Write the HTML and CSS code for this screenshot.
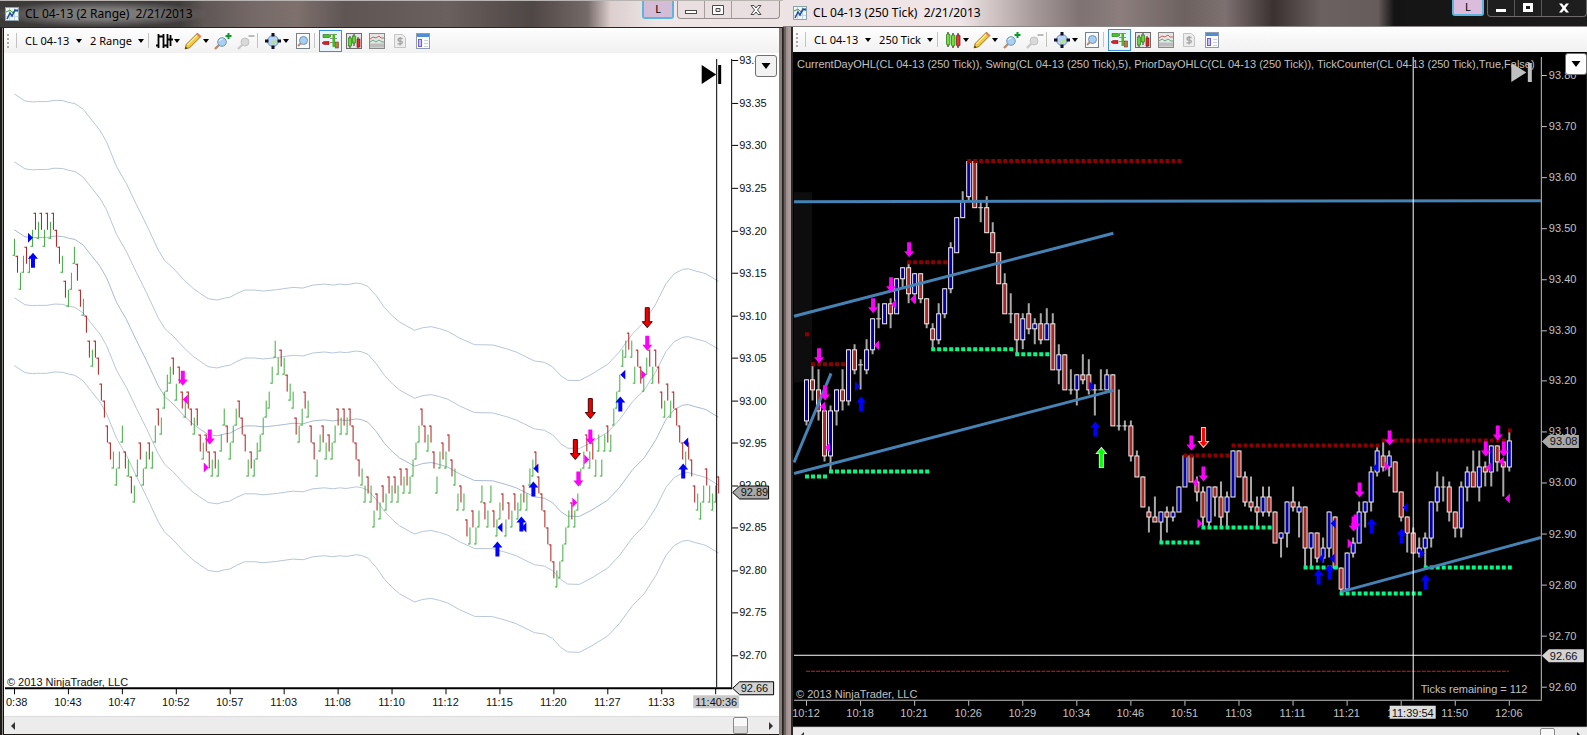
FILE: index.html
```html
<!DOCTYPE html>
<html lang="en">
<head>
<meta charset="utf-8">
<title>NinjaTrader charts</title>
<link rel="stylesheet" href="styles.css">
</head>
<body>
<svg class="sprite" aria-hidden="true">
  <symbol id="i-app" viewBox="0 0 14 14"><rect x=".5" y=".5" width="13" height="13" fill="#eef6fa" stroke="#8fa3ad"/><path d="M4.500 1v12M9.500 1v12M1 4.500h12M1 9.500h12" stroke="#c3d6de"/><path d="M1 5l4-2 3 3 5-4" stroke="#4aa54a" fill="none"/><path d="M2 12l3-6 2 3 3-6 3 1" stroke="#1d4f9c" stroke-width="1.500" fill="none"/></symbol>
  <symbol id="i-bars" viewBox="0 0 18 18"><path d="M3.500 2v14M1 13.500h2M3 4.500h3M8.500 2v14M6 4.500h2M9 13.500h1M12.500 2v14M10 13.500h2M15.500 3v11M13 7.500h5" stroke="#000" stroke-width="1.800"/></symbol>
  <symbol id="i-candles" viewBox="0 0 18 18"><path d="M4 1v15M9 2v15M14 2v15" stroke="#000"/><rect x="2.500" y="3" width="3.500" height="11" rx="1" fill="#6fe03a" stroke="#206b10" stroke-width=".7"/><rect x="7.500" y="4" width="3.500" height="11" rx="1" fill="#6fe03a" stroke="#206b10" stroke-width=".7"/><rect x="12.500" y="4" width="3.500" height="11" rx="1" fill="#e03a3a" stroke="#7b1010" stroke-width=".7"/></symbol>
  <symbol id="i-pencil" viewBox="0 0 16 16"><path d="M1 15l1-4L12 1l3 3L5 14z" fill="#f3c93c" stroke="#8a6a14" stroke-width=".8"/><path d="M11 2l1-1 3 3-1 1z" fill="#e0787a"/><path d="M3 11.500L11.500 3" stroke="#fff0a8"/><path d="M1 15l.6-2 1.400 1.400z" fill="#222"/></symbol>
  <symbol id="i-lens" viewBox="0 0 18 18"><path d="M1 17l4-4" stroke="#b98b6d" stroke-width="2.400"/><circle cx="8" cy="10" r="4.300" fill="#a9d0f2" stroke="#7396b8"/><path d="M5.500 9a3 3 0 0 1 3-2" stroke="#fff" fill="none"/></symbol>
  <symbol id="i-zoomin" viewBox="0 0 18 18"><use href="#i-lens"/><path d="M14.500 1v6M11.500 4h6" stroke="#0a9a2a" stroke-width="2"/></symbol>
  <symbol id="i-zoomout" viewBox="0 0 18 18"><path d="M1 17l4-4" stroke="#c9c9c9" stroke-width="2.400"/><circle cx="8" cy="10" r="4" fill="#d9d9d9" stroke="#c2c2c2"/><path d="M11.500 4h6" stroke="#bbb" stroke-width="2"/></symbol>
  <symbol id="i-target" viewBox="0 0 18 18"><circle cx="9" cy="9" r="5.500" fill="#b7d2f3" stroke="#6b93c4"/><path d="M6 12a5 5 0 0 0 7-4c-2 0-5 1-7 4z" fill="#b7e08a"/><path d="M9 1v3.500M9 13.500V17M1 9h3.500M13.500 9H17" stroke="#112" stroke-width="3"/></symbol>
  <symbol id="i-page" viewBox="0 0 18 18"><rect x="2.500" y="1.500" width="13" height="15" fill="#f8fafc" stroke="#7a8088"/><path d="M4 14l3-3" stroke="#b98b6d" stroke-width="2"/><circle cx="9.500" cy="8.500" r="4" fill="#a9cdee" stroke="#7396b8"/></symbol>
  <symbol id="i-trader" viewBox="0 0 18 18"><path d="M1 2.500h6l2 1.500-2 1.500H1z" stroke-width=".6" fill="#49c51e" stroke="#1e6b10"/><path d="M7 9.500H2L0 11l2 1.500h5z" fill="#dc2222" stroke="#8a1010" stroke-width=".6"/><path d="M8 2.500h7M8 6.500h7M8 10.500h7" stroke="#777" stroke-width=".8"/><rect x="10.500" y="2" width="2.500" height="13" fill="#49b81e"/><rect x="13.500" y="10" width="3" height="6" fill="#b77a4a" stroke="#70401c" stroke-width=".6"/></symbol>
  <symbol id="i-chart" viewBox="0 0 18 18"><rect x="1.500" y="1.500" width="15" height="15" fill="#e4e4e4" stroke="#6b6b6b"/><path d="M5 4v12M9 2v12M13 5v11" stroke="#333"/><rect x="3.500" y="6" width="3" height="8" fill="#63d832" stroke="#1e6b10" stroke-width=".6"/><rect x="7.500" y="4" width="3" height="7" fill="#63d832" stroke="#1e6b10" stroke-width=".6"/><rect x="12" y="7" width="3" height="8" fill="#dc2a2a" stroke="#7b1010" stroke-width=".6"/></symbol>
  <symbol id="i-lines" viewBox="0 0 18 18"><rect x="1.500" y="1.500" width="15" height="15" fill="#e6e6e6" stroke="#8a8a8a"/><path d="M2 7l3-2 3 1 3-2 2 2 3 0" stroke="#dc5a5a" fill="none"/><path d="M2 10l3-2 3 2 3-2 3 2 2 0" stroke="#5aaa7a" fill="none"/><path d="M2 13.500h14" stroke="#bdbdbd" stroke-width="4"/></symbol>
  <symbol id="i-money" viewBox="0 0 18 18"><path d="M3.500 2.500h8l3 3v10h-11z" fill="#ededed" stroke="#c4c4c4"/><path d="M11.500 6.500H8.300a1.300 1.300 0 0 0 0 2.600h1.600a1.300 1.300 0 0 1 0 2.700H6.500M9.100 5v8.500" stroke="#a4a4a4" stroke-width="1.300" fill="none"/></symbol>
  <symbol id="i-panel" viewBox="0 0 18 18"><rect x="2.500" y="1.500" width="13" height="15" fill="#fafcff" stroke="#8f9bb0"/><path d="M3 3.500h12" stroke="#4d8fd0" stroke-width="3"/><rect x="4.500" y="7.500" width="3" height="7" fill="#c9c0f5" stroke="#6f5fd0"/><path d="M10 8.500h4M10 11.500h4M10 14.500h4" stroke="#ccd3dd"/></symbol>
  <symbol id="i-caret" viewBox="0 0 6 4"><path d="M0 0h6L3 4z"/></symbol>
</svg>

<main class="desktop">
  <section class="window window-range" aria-label="CL 04-13 2 Range chart">
    <header class="titlebar">
      <svg class="app-icon"><use href="#i-app"/></svg>
      <h1 class="title">CL 04-13 (2 Range)&nbsp; 2/21/2013</h1>
      <button class="link-button" type="button">L</button>
      <div class="caption">
        <button type="button" aria-label="Minimize"><svg viewBox="0 0 14 12"><rect x="1.500" y="6.500" width="11" height="3"/></svg></button>
        <button type="button" aria-label="Maximize"><svg viewBox="0 0 14 12"><path d="M1.500 1.500h11v9h-11zM5 4.500h4v3H5z" fill-rule="evenodd"/></svg></button>
        <button class="close" type="button" aria-label="Close"><svg viewBox="0 0 14 12"><path d="M2 1.500h3l2 2.500 2-2.500h3L8.500 6l3.500 4.500H9L7 8l-2 2.500H2L5.500 6z"/></svg></button>
      </div>
    </header>
    <div class="toolbar">
      <span class="grip"></span><span class="sep"></span>
      <label class="pick"><select aria-label="Instrument"><option>CL 04-13</option></select><svg class="caret"><use href="#i-caret"/></svg></label>
      <label class="pick"><select aria-label="Interval"><option>2 Range</option></select><svg class="caret"><use href="#i-caret"/></svg></label>
      <span class="sep"></span>
      <button class="tool drop" type="button" aria-label="Chart style"><svg class="icon"><use href="#i-bars"/></svg><svg class="caret"><use href="#i-caret"/></svg></button>
      <button class="tool drop" type="button" aria-label="Drawing tools"><svg class="icon"><use href="#i-pencil"/></svg><svg class="caret"><use href="#i-caret"/></svg></button>
      <button class="tool" type="button" aria-label="Zoom in"><svg class="icon"><use href="#i-zoomin"/></svg></button>
      <button class="tool" type="button" aria-label="Zoom out"><svg class="icon"><use href="#i-zoomout"/></svg></button>
      <span class="sep"></span>
      <button class="tool drop" type="button" aria-label="Cross hair"><svg class="icon"><use href="#i-target"/></svg><svg class="caret"><use href="#i-caret"/></svg></button>
      <button class="tool" type="button" aria-label="Data box"><svg class="icon"><use href="#i-page"/></svg></button>
      <span class="sep"></span>
      <button class="tool active" type="button" aria-label="Chart trader"><svg class="icon"><use href="#i-trader"/></svg></button>
      <button class="tool" type="button" aria-label="Data series"><svg class="icon"><use href="#i-chart"/></svg></button>
      <button class="tool" type="button" aria-label="Indicators"><svg class="icon"><use href="#i-lines"/></svg></button>
      <button class="tool" type="button" aria-label="Strategies"><svg class="icon"><use href="#i-money"/></svg></button>
      <button class="tool" type="button" aria-label="Properties"><svg class="icon"><use href="#i-panel"/></svg></button>
    </div>
    <div class="plot">
      <svg class="chart" id="range-chart" viewBox="4 53 776 664" role="img" aria-label="Range bar chart"></svg>
      <button class="plot-menu" type="button" aria-label="Axis menu"><svg><use href="#i-caret"/></svg></button>
    </div>
    <div class="scroll">
      <button type="button" aria-label="Scroll left"><svg viewBox="0 0 4 8"><path d="M4 0v8L0 4z"/></svg></button>
      <input type="range" aria-label="Scroll position" min="0" max="100" value="98">
      <button type="button" aria-label="Scroll right"><svg viewBox="0 0 4 8"><path d="M0 0v8l4-4z"/></svg></button>
    </div>
  </section>

  <section class="window window-tick" aria-label="CL 04-13 250 Tick chart">
    <header class="titlebar">
      <svg class="app-icon"><use href="#i-app"/></svg>
      <h1 class="title">CL 04-13 (250 Tick)&nbsp; 2/21/2013</h1>
      <button class="link-button" type="button">L</button>
      <div class="caption">
        <button type="button" aria-label="Minimize"><svg viewBox="0 0 14 12"><rect x="2" y="7" width="10" height="3"/></svg></button>
        <button type="button" aria-label="Maximize"><svg viewBox="0 0 14 12"><path d="M2 1h10v9H2zM5 4h4v3H5z" fill-rule="evenodd"/></svg></button>
        <button class="close" type="button" aria-label="Close"><svg viewBox="0 0 14 12"><path d="M2 1.500h3l2 2.500 2-2.500h3L8.500 6l3.500 4.500H9L7 8l-2 2.500H2L5.500 6z"/></svg></button>
      </div>
    </header>
    <div class="toolbar">
      <span class="grip"></span><span class="sep"></span>
      <label class="pick"><select aria-label="Instrument"><option>CL 04-13</option></select><svg class="caret"><use href="#i-caret"/></svg></label>
      <label class="pick"><select aria-label="Interval"><option>250 Tick</option></select><svg class="caret"><use href="#i-caret"/></svg></label>
      <span class="sep"></span>
      <button class="tool drop" type="button" aria-label="Chart style"><svg class="icon"><use href="#i-candles"/></svg><svg class="caret"><use href="#i-caret"/></svg></button>
      <button class="tool drop" type="button" aria-label="Drawing tools"><svg class="icon"><use href="#i-pencil"/></svg><svg class="caret"><use href="#i-caret"/></svg></button>
      <button class="tool" type="button" aria-label="Zoom in"><svg class="icon"><use href="#i-zoomin"/></svg></button>
      <button class="tool" type="button" aria-label="Zoom out"><svg class="icon"><use href="#i-zoomout"/></svg></button>
      <span class="sep"></span>
      <button class="tool drop" type="button" aria-label="Cross hair"><svg class="icon"><use href="#i-target"/></svg><svg class="caret"><use href="#i-caret"/></svg></button>
      <button class="tool" type="button" aria-label="Data box"><svg class="icon"><use href="#i-page"/></svg></button>
      <span class="sep"></span>
      <button class="tool active" type="button" aria-label="Chart trader"><svg class="icon"><use href="#i-trader"/></svg></button>
      <button class="tool" type="button" aria-label="Data series"><svg class="icon"><use href="#i-chart"/></svg></button>
      <button class="tool" type="button" aria-label="Indicators"><svg class="icon"><use href="#i-lines"/></svg></button>
      <button class="tool" type="button" aria-label="Strategies"><svg class="icon"><use href="#i-money"/></svg></button>
      <button class="tool" type="button" aria-label="Properties"><svg class="icon"><use href="#i-panel"/></svg></button>
    </div>
    <div class="plot">
      <svg class="chart" id="tick-chart" viewBox="794 52 793 674" role="img" aria-label="Tick candlestick chart"></svg>
      <button class="plot-menu" type="button" aria-label="Axis menu"><svg><use href="#i-caret"/></svg></button>
    </div>
    <div class="scroll">
      <button type="button" aria-label="Scroll left"><svg viewBox="0 0 4 8"><path d="M4 0v8L0 4z"/></svg></button>
      <input type="range" aria-label="Scroll position" min="0" max="100" value="98">
      <button type="button" aria-label="Scroll right"><svg viewBox="0 0 4 8"><path d="M0 0v8l4-4z"/></svg></button>
    </div>
  </section>
</main>
<script src="charts.js"></script>
</body>
</html>
```
FILE: charts.js
```javascript
(function () {
  // Marker shapes, each anchored at its tip (arrows) or centre (triangles).
  function up(x, y, cls) {
    return '<path class="' + cls + '" d="M' + x + ' ' + y + 'l5 6h-3v9h-4v-9h-3z"/>';
  }
  function down(x, y, cls) {
    return '<path class="' + cls + '" d="M' + (x - 2) + ' ' + y + 'h4v9h3l-5 6l-5 -6h3z"/>';
  }
  function bigUp(x, y, cls) {
    return '<path class="' + cls + '" d="M' + x + ' ' + y + 'l5 6h-3v14h-4v-14h-3z"/>';
  }
  function bigDown(x, y, cls) {
    return '<path class="' + cls + '" d="M' + (x - 2) + ' ' + y + 'h4v14h3l-5 6l-5 -6h3z"/>';
  }
  function left(x, y, cls) {
    return '<path class="' + cls + '" d="M' + (x - 3) + ' ' + y + 'l5 -5v10z"/>';
  }
  function right(x, y, cls) {
    return '<path class="' + cls + '" d="M' + (x + 2) + ' ' + y + 'l-5 -5v10z"/>';
  }
  function each(list, shape, cls) {
    return list.map(function (p) { return shape(p[0] + 1, p[1], cls); }).join('');
  }
  function line(x1, y1, x2, y2, cls) {
    return '<line x1="' + x1 + '" y1="' + y1 + '" x2="' + x2 + '" y2="' + y2 + '" class="' + cls + '"/>';
  }
  function text(x, y, s, cls) {
    return '<text x="' + x + '" y="' + y + '" class="' + cls + '">' + s + '</text>';
  }
  function tag(x, y, w, s, cls) {
    return '<path class="' + cls + '" d="M' + x + ' ' + y + 'l7 -6.500h' + (w - 7) + 'v13h-' + (w - 7) + 'z"/>' +
      text(x + 8, y + 4, s, 'tag-text');
  }

  /* ---------- 2 range chart ---------- */

  // Each bar: top in ticks below 93.22, then g (up) or r (down).
  var bars = ('3g 5r 7g 5g 4r 5g 2g 0r 1g 0r 2g 0r 1g 0r 2r 4r 5g 8r 9g 7g 4g 6r 9r 10g 12r 15r 16g 15r 17r ' +
    '20r 22r 25r 27r 28g 30g 28g 25g 28r 29g 31r 32g 29g 27r 30g 28g 27r 28g 25g 23r 24g 21g 19g 18g 17r 20g 18r ' +
    '21r 22g 21r 23r 24g 23r 26r 27g 26r 28r 29g 28r 29g 26g 23g 25r 27g 25g 23g 22r 24r 26r 29g 28r 29g 27g 26g ' +
    '24g 22g 21g 18g 15g 17g 16r 17g 19r 20g 21g 24r 25g 23g 21r 22g 25r 27r 29g 26g 25r 27g 26r 27g 25g 23r 24g ' +
    '23r 24g 23r 25r 27r 29r 30g 32g 31r 32g 35g 33r 34g 32r 33g 31r 32g 31r 32g 30r 31g 30r 31g 29g 27g 25g 23r ' +
    '25r 26g 25r 28r 31g 28g 27r 28g 26r 29r 30g 33g 32r 33g 36r 37g 35r 37g 35g 32g 34r 35g 32g 35r 36g 34g 33r ' +
    '36g 34r 35g 33r 34g 33g 32r 33g 30g 29g 28r 31r 33r 35r 37r 39r 41r 42g 41g 39g 37g 35g 34r 35g 33g 30g 28g ' +
    '26r 28g 27r 29g 26g 29g 26g 25r 26g 23g 21g 19g 16g 15g 14r 15g 18g 16r 18r 19g 17g 16r 18g 16r 18r 21r 22g ' +
    '20r 22g 21r 23r 25r 27r 28g 27r 29r 32r 33g 34g 32g 30r 32g 33g 32g 31r').split(' ');

  var tick = 8.51;
  var barPaths = { g: '', r: '' };
  bars.forEach(function (b, i) {
    var color = b.slice(-1);
    var x = 14.5 + i * 3;
    var y = Math.round(213.4 + parseInt(b, 10) * tick);
    barPaths[color] += 'M' + x + ' ' + y + 'v17' +
      (color === 'r' ? 'M' + (x - 2) + ' ' + (y + 0.5) + 'h2' : 'M' + (x - 2) + ' ' + (y + 16.5) + 'h2');
  });

  // Middle band, in thirds of a unit.
  var band = '43,690 75,711 97,714 110,713 140,713 165,709 188,710 205,715 225,719 250,736 275,768 300,799 320,834 ' +
    '350,908 380,960 410,1023 440,1083 475,1158 495,1191 520,1213 550,1246 580,1274 600,1288 625,1305 652,1309 ' +
    '675,1303 690,1301 710,1290 735,1279 765,1279 790,1282 830,1278 880,1271 910,1273 940,1264 975,1261 1000,1264 ' +
    '1020,1261 1040,1263 1070,1258 1085,1260 1105,1268 1130,1296 1155,1332 1180,1358 1200,1375 1245,1400 1270,1392 ' +
    '1295,1389 1320,1395 1345,1403 1380,1423 1425,1443 1480,1444 1520,1455 1550,1465 1605,1492 1635,1496 1660,1510 ' +
    '1685,1537 1705,1550 1740,1551 1775,1533 1825,1502 1860,1465 1900,1410 1935,1375 1970,1320 2000,1260 2025,1230 ' +
    '2050,1217 2067,1215 2090,1222 2110,1227 2120,1230 2158,1253';
  var bands = [-408, -204, 0, 204, 408].map(function (dy) {
    return '<polyline class="band' + (dy ? '' : ' band-mid') + '" transform="scale(.33333) translate(0 ' + dy + ')" points="' + band + '"/>';
  }).join('');

  var axis = line(732.5, 59, 732.5, 688, 'ink') + line(5, 689, 733, 689, 'ink thick') + line(717.5, 59, 717.5, 688, 'ink');
  var p, i, y;
  for (i = 0; i <= 14; i++) {
    p = 93.4 - i * 0.05;
    y = Math.round(60.3 + i * 5 * tick);
    axis += line(733, y + 0.5, 739, y + 0.5, 'ink') + text(740, y + 4, p.toFixed(2), 'label');
  }
  for (i = 0; i <= 13; i++) {
    axis += line(14.5 + i * 54, 689, 14.5 + i * 54, 695, 'ink');
  }
  axis += text(6, 707, '0:38', 'label');
  ['10:43', '10:47', '10:52', '10:57', '11:03', '11:08', '11:10', '11:12', '11:15', '11:20', '11:27', '11:33']
    .forEach(function (t, n) {
      axis += text(68 + n * 54, 707, t, 'label mid');
    });

  document.getElementById('range-chart').innerHTML =
    bands +
    '<path class="bar-up" d="' + barPaths.g + '"/><path class="bar-down" d="' + barPaths.r + '"/>' +
    axis +
    '<path d="M702.500 65v19l14.500 -9.500zM719 65h3v19h-3z"/>' +
    each([[32, 253], [497, 542], [521, 517], [533, 482], [620, 397], [683, 464]], up, 'blue') +
    each([[182, 371], [209, 430], [578, 472], [590, 430], [647, 336]], down, 'pink') +
    each([[575, 440], [590, 399], [647, 308]], bigDown, 'red-dark') +
    each([[30, 238]], right, 'blue') +
    each([[500, 528], [524, 528], [536, 469], [623, 375], [686, 443]], left, 'blue') +
    each([[185, 400]], left, 'pink') +
    each([[206, 468], [575, 503], [587, 460], [644, 375]], right, 'pink') +
    tag(733.5, 493, 36, '92.89', 'tag ink-edge') + tag(733.5, 689, 41, '92.66', 'tag tag-light ink-edge') +
    '<rect class="time-mark" x="694" y="696" width="46" height="13"/>' + text(717, 707, '11:40:36', 'label mid') +
    text(7, 687, '© 2013 NinjaTrader, LLC', 'note');

  /* ---------- 250 tick chart ---------- */

  // Each candle: colour, body top, body bottom, wick high, wick low, in ticks below 93.63.
  var candles = [
    'b43,51,43,52', 'r43,45,40,47', 'r45,49,41,51', 'r49,58,48,59', 'b49,58,48,61', 'b45,49,45,52', 'r45,47,41,49',
    'b37,47,37,48', 'r37,41,36,42', 'b40,40,39,45', 'b37,41,35,42', 'b31,37,31,38', 'r31,31,28,33', 'b28,32,28,32',
    'r28,30,27,33', 'b23,30,23,30', 'b21,23,21,25', 'r21,26,20,28', 'b22,26,22,28', 'r22,27,22,28', 'r27,32,27,33',
    'r33,35,32,37', 'b30,35,28,36', 'b25,30,25,31', 'b17,25,16,26', 'b11,18,11,18', 'b8,11,6,11', 'b0,7,0,8',
    'r0,9,0,9', 'r9,9,8,12', 'r9,14,7,14', 'r14,18,12,18', 'r18,24,18,24', 'r24,30,22,30', 'r30,30,26,32',
    'r30,35,30,38', 'b31,35,30,37', 'r30,33,28,34', 'b32,33,31,36', 'r32,35,30,36', 'b32,35,29,35', 'r32,41,30,41',
    'b38,41,36,44', 'r38,45,38,45', 'r45,45,41,46', 'b42,45,42,48', 'r42,43,38,44', 'r42,45,39,46', 'r45,45,44,50',
    'r45,45,41,45', 'b42,45,41,45', 'r42,52,42,52', 'r52,52,45,53', 'r52,52,51,53', 'r52,58,51,59', 'r58,62,57,62',
    'r62,68,62,68', 'r69,70,68,73', 'r70,71,66,71', 'b69,71,69,75', 'r69,70,68,73', 'b69,70,68,71', 'b64,69,64,69',
    'b58,64,58,64', 'r58,63,58,63', 'r63,65,62,67', 'r65,70,64,72', 'b64,71,64,72', 'r64,66,64,70', 'r66,70,63,72',
    'b66,69,65,72', 'b57,66,57,66', 'r57,62,57,62', 'r62,67,61,68', 'r67,68,62,69', 'r68,69,66,72', 'b66,69,64,70',
    'r66,69,64,70', 'r69,75,69,75', 'b73,74,73,78', 'b67,73,67,76', 'r67,68,64,69', 'b68,69,67,74', 'r68,76,68,80',
    'b73,76,73,80', 'r73,78,73,79', 'b76,78,74,79', 'b69,76,69,78', 'r70,80,70,80', 'r80,84,80,85', 'b77,84,77,84',
    'b75,77,74,78', 'b69,75,67,75', 'b67,69,67,72', 'b61,67,60,69', 'b57,61,56,62', 'r58,60,55,61', 'b58,60,57,62',
    'r59,65,59,65', 'r65,70,65,71', 'r70,73,70,77', 'r73,77,72,77', 'b76,77,74,78', 'b74,76,73,80', 'b67,74,67,76',
    'b64,67,61,69', 'r64,64,62,67', 'r64,69,63,71', 'r69,72,69,74', 'b64,72,63,74', 'b61,64,60,67', 'r61,64,57,64',
    'b60,64,57,67', 'r60,61,59,64', 'b56,61,56,64', 'r56,59,56,61', 'r59,60,59,66', 'b55,60,53,61'
  ];
  function ty(t) { return Math.round(160.8 + t * 5.08); }

  var wicks = '', bodies = '';
  candles.forEach(function (c, n) {
    var v = c.slice(1).split(',').map(Number);
    var x = 807 + n * 6;
    wicks += 'M' + (x + 0.5) + ' ' + ty(v[2]) + 'V' + ty(v[3]);
    if (v[0] === v[1]) {
      bodies += '<path class="doji" d="M' + (x - 2) + ' ' + (ty(v[0]) + 0.5) + 'h5"/>';
    } else {
      bodies += '<rect class="candle ' + (c[0] === 'b' ? 'rise' : 'fall') + '" x="' + (x - 1.5) + '" y="' + (ty(v[0]) + 0.5) +
        '" width="4" height="' + (ty(v[1]) - ty(v[0])) + '"/>';
    }
  });

  // Swing dots: first candle, last candle, level in ticks below 93.63.
  function dots(list, cls) {
    return list.map(function (s) {
      var y = ty(s[2]);
      return '<path class="' + cls + '" d="M' + (807 + s[0] * 6 - 1) + ' ' + y + 'H' + (807 + s[1] * 6 + 3) + '"/>';
    }).join('');
  }
  var swings =
    dots([[0, 0, 34], [1, 6, 40], [17, 23, 20], [27, 62, 0], [63, 70, 58], [71, 95, 56], [96, 116, 55], [117, 117, 53]], 'dots high') +
    dots([[0, 3, 62], [4, 20, 61], [21, 34, 37], [35, 40, 38], [59, 65, 75], [66, 77, 72], [83, 88, 80], [89, 102, 85], [103, 117, 80]], 'dots low');

  var axis2 = line(1541.5, 57, 1541.5, 699, 'pale') + line(795, 699.5, 1542, 699.5, 'pale');
  for (i = 0; i <= 12; i++) {
    y = Math.round(75 + i * 50.9);
    axis2 += line(1542, y + 0.5, 1547, y + 0.5, 'pale') + text(1549, y + 4, (93.8 - i * 0.1).toFixed(2), 'label light');
  }
  ['10:12', '10:18', '10:21', '10:26', '10:29', '10:34', '10:46', '10:51', '11:03', '11:11', '11:21', '11:38', '11:50', '12:06']
    .forEach(function (t, n) {
      axis2 += line(807.5 + n * 54, 700, 807.5 + n * 54, 705, 'pale') + text(807 + n * 54, 716, t, 'label light mid');
    });

  document.getElementById('tick-chart').innerHTML =
    '<rect x="794" y="52" width="793" height="674"/><rect class="session" x="795" y="192" width="18" height="190"/>' +
    '<path class="wick" d="' + wicks + '"/>' + bodies + swings +
    line(795, 201.5, 1541, 200.5, 'trend') + line(795, 316, 1114, 233, 'trend') + line(795, 473, 1114, 390, 'trend') +
    line(795, 462, 832, 373, 'trend') + line(1342, 591, 1541, 537, 'trend') +
    each([[861, 396], [1095, 421], [1318, 569], [1329, 564], [1371, 518], [1401, 528], [1425, 574]], up, 'blue') +
    each([[858, 386], [1092, 386], [1422, 553]], right, 'blue') +
    each([[1321, 558], [1333, 523], [1332, 558], [1375, 467], [1405, 507]], left, 'blue') +
    each([[819, 348], [825, 385], [873, 298], [891, 277], [909, 242], [1191, 435], [1203, 466], [1359, 482], [1353, 516],
      [1355, 514], [1389, 430], [1485, 441], [1497, 425], [1503, 441]], down, 'pink') +
    each([[823, 406], [828, 447], [877, 345], [894, 304], [913, 299], [1195, 482], [1488, 467], [1501, 461], [1507, 498]], left, 'pink') +
    each([[1200, 523], [1350, 543], [1387, 466]], right, 'pink') +
    each([[1101, 447]], bigUp, 'green') + each([[1203, 427]], bigDown, 'red') +
    line(807, 670.5, 1509, 670.5, 'counter') + axis2 +
    line(795, 654.5, 1541, 654.5, 'cross') + line(1413.5, 57, 1413.5, 699, 'cross') +
    tag(1542, 441, 37, '93.08', 'tag') + tag(1542, 655, 42, '92.66', 'tag tag-light') +
    '<rect class="time-mark bright" x="1390" y="705" width="46" height="13"/>' + text(1413, 716, '11:39:54', 'label mid') +
    '<path class="skip" d="M1511.500 63v19l15 -9.500zM1528 63h4v19h-4z"/>' +
    text(798, 68, 'CurrentDayOHL(CL 04-13 (250 Tick)), Swing(CL 04-13 (250 Tick),5), PriorDayOHLC(CL 04-13 (250 Tick)), TickCounter(CL 04-13 (250 Tick),True,False)', 'note light') +
    text(797, 697, '© 2013 NinjaTrader, LLC', 'note light') +
    text(1421, 692, 'Ticks remaining = 112', 'note light');
})();
```
FILE: styles.css
```css
* { box-sizing: border-box; }

body {
  margin: 0;
  background: #1b1817;
  font-family: "Noto Sans", "Open Sans", sans-serif;
  font-size: 12px;
  color: #000;
}

button, select { font: inherit; color: inherit; border: 0; padding: 0; background: none; }
svg { display: block; }
.sprite { position: absolute; width: 0; height: 0; }

.desktop { display: flex; overflow: hidden; }
.window { display: flex; flex-direction: column; min-width: 0; min-height: 100vh; overflow: hidden; }
.window-range {
  flex: 784 1 0;
  background: linear-gradient(90deg, #1c1a19 0 2px, #8c8885 2px 3px, #111 3px 4px, transparent 4px calc(100% - 4px), #8b7d7c calc(100% - 4px) calc(100% - 1px), #222 calc(100% - 1px));
  padding: 0 4px;
}
.window-tick {
  flex: 803 1 0;
  padding-left: 10px;
  background: linear-gradient(90deg, #3a3433 0 1px, #6e6261 1px 3px, #9d908e 3px 5px, #a89b99 5px 8px, #2c2827 8px 10px, #000 10px);
}

/* Title bars */
.titlebar { display: flex; align-items: center; flex: none; }
.window-range .titlebar {
  height: 28px;
  margin: 0 -4px;
  padding: 0 3px 0 5px;
  border-top: 1px solid #b8b4b2;
  border-bottom: 1px solid #2a2523;
  background:
    radial-gradient(ellipse 110px 13px at 100px 13px, #7c7a79 40%, transparent),
    linear-gradient(90deg, #3c3a39 0, #3f3d3c 23%, #5f5655 26%, #776b69 33%, #7d706d 38%, #5f5654 44%, #6a605e 57%, #4f4745 68%, #746a68 75%, #dccfce 78%, #efe6e6 84%, #efe4e4);
}
.window-tick .titlebar {
  height: 27px;
  margin-left: -10px;
  padding-left: 10px;
  border-bottom: 1px solid #8b8686;
  background:
    linear-gradient(90deg, #ede3e4 0, #f0e6e7 22%, #c9bdbd 27%, #a89b9b 31%, #7e7272 37%, #8b7e7d 42%, #6e6261 50%, #7d7170 55%, #3a3130 61%, #6b6160 67%, #665c5b 74%, #151414 76%, #1c1c1c);
}
.app-icon { width: 14px; height: 14px; }
.title { margin: 0 auto 0 6px; font-size: 12px; font-weight: 400; line-height: 18px; white-space: pre; }
.link-button {
  align-self: flex-start;
  width: 32px;
  height: 18px;
  border: 2px solid #5fb4de;
  border-top: 0;
  border-radius: 0 0 3px 3px;
  background: #d4bcd6;
  font-size: 11px;
  line-height: 16px;
}
.window-tick .link-button { height: 16px; line-height: 14px; background: #dcbcdc; }
.caption {
  display: flex;
  align-self: flex-start;
  height: 18px;
  margin-left: 3px;
  border: 1px solid #9a8f90;
  border-top: 0;
  border-radius: 0 0 4px 4px;
}
.window-range .caption { background: #e9dfe0; }
.window-tick .caption { height: 17px; border-color: #6c6a6a; background: #1e1e1e; }
.caption button { display: grid; place-items: center; width: 27px; border-right: 1px solid #a89d9e; }
.caption .close { width: 47px; border-right: 0; }
.window-tick .caption button { border-color: #5a5858; }
.window-tick .caption .close { width: 44px; }
.caption svg { width: 14px; height: 12px; fill: #fff; stroke: #4d484a; }
.window-tick .caption svg { stroke: none; }

/* Toolbars */
.toolbar {
  display: flex;
  align-items: center;
  flex: none;
  height: 25px;
  padding-left: 3px;
  background: linear-gradient(#fefefe, #f1f1f1);
}
.grip { width: 2px; height: 14px; margin-right: 7px; background: repeating-linear-gradient(#a9a9a9 0 2px, transparent 2px 4px); }
.sep { width: 1px; height: 15px; margin-right: 4px; background: #c3c3c3; }
.pick { display: flex; align-items: center; padding-left: 4px; margin-right: 4px; }
.pick select { appearance: none; margin-right: 6px; font-size: 11px; line-height: 16px; }
.caret { width: 6px; height: 4px; }
.tool { display: flex; align-items: center; justify-content: center; width: 23px; height: 22px; }
.tool.drop { width: 28px; gap: 1px; margin-right: 1px; }
.tool.active { border: 1px solid #3c8fdc; background: #eaf4fd; }
.icon { width: 18px; height: 18px; flex: none; }

/* Charts */
.plot { position: relative; flex: none; background: #fff; }
.chart { width: 100%; height: auto; font-family: "Liberation Sans", Arial, sans-serif; }
.plot-menu {
  position: absolute;
  top: 2px;
  right: 2px;
  display: grid;
  place-items: center;
  width: 22px;
  height: 22px;
  border: 1px solid #707070;
  border-radius: 3px;
  background: #f2f2f2;
}
.window-tick .plot-menu { right: 0; top: 1px; background: #fff; }
.plot-menu svg { width: 10px; height: 6px; }

.label, .tag-text { font-size: 11px; fill: #111; }
.note { font-size: 11px; fill: #111; }
.mid { text-anchor: middle; }
.light { fill: #c0c0c0; }
.ink { stroke: #000; }
.thick { stroke-width: 2; }
.pale { stroke: #c0c0c0; }
.cross { stroke: #fff; }
.band { fill: none; stroke: #b8c6d8; stroke-width: 3; }
.band-mid { stroke: #a9bad0; }
.bar-up { fill: none; stroke: #3fae3f; }
.bar-down { fill: none; stroke: #b01c1c; }
.blue { fill: #00f; }
.pink { fill: #f0f; }
.green { fill: #0f0; stroke: #c8f5c8; stroke-width: 1; }
.red { fill: #f00; stroke: #e8c8c0; stroke-width: 1; }
.red-dark { fill: #e00; stroke: #400; stroke-width: 1; }
.tag { fill: #a9a9a9; }
.tag-light { fill: #d3d3d3; }
.ink-edge { stroke: #000; }
.time-mark { fill: #c8c8c8; }
.bright { fill: #ddd; }
.session { fill: #0d0d0d; }
.wick { fill: none; stroke: #a8a8a8; stroke-width: 2; }
.doji { stroke: #d8d8d8; }
.candle { stroke: #f4ecec; }
.rise { fill: #0000a8; }
.fall { fill: #a52a2a; }
.dots { fill: none; stroke-width: 4; stroke-dasharray: 4 2; }
.high { stroke: #8b0000; }
.low { stroke: #00fa8a; }
.trend { stroke: #4682b4; stroke-width: 3; }
.counter { stroke: #d02020; stroke-dasharray: 4 1; }
.skip { fill: #c0c0c0; }

/* Scroll bars */
.scroll { display: flex; align-items: center; flex: none; height: 18px; background: #ececec; border-top: 1px solid #ddd; }
.window-tick .scroll { height: 18px; margin-bottom: -9px; }
.scroll button { display: grid; place-items: center; width: 17px; height: 17px; }
.scroll button svg { width: 4px; height: 8px; fill: #333; }
.scroll input { flex: 1; min-width: 0; height: 17px; margin: 0; appearance: none; background: none; }
.scroll input::-webkit-slider-thumb {
  appearance: none;
  width: 15px;
  height: 17px;
  border: 1px solid #888;
  border-radius: 2px;
  background: linear-gradient(#f8f8f8 50%, #d6d6d6 50%);
}
.scroll input::-moz-range-thumb { width: 13px; height: 15px; border: 1px solid #888; border-radius: 2px; background: #e8e8e8; }
```
